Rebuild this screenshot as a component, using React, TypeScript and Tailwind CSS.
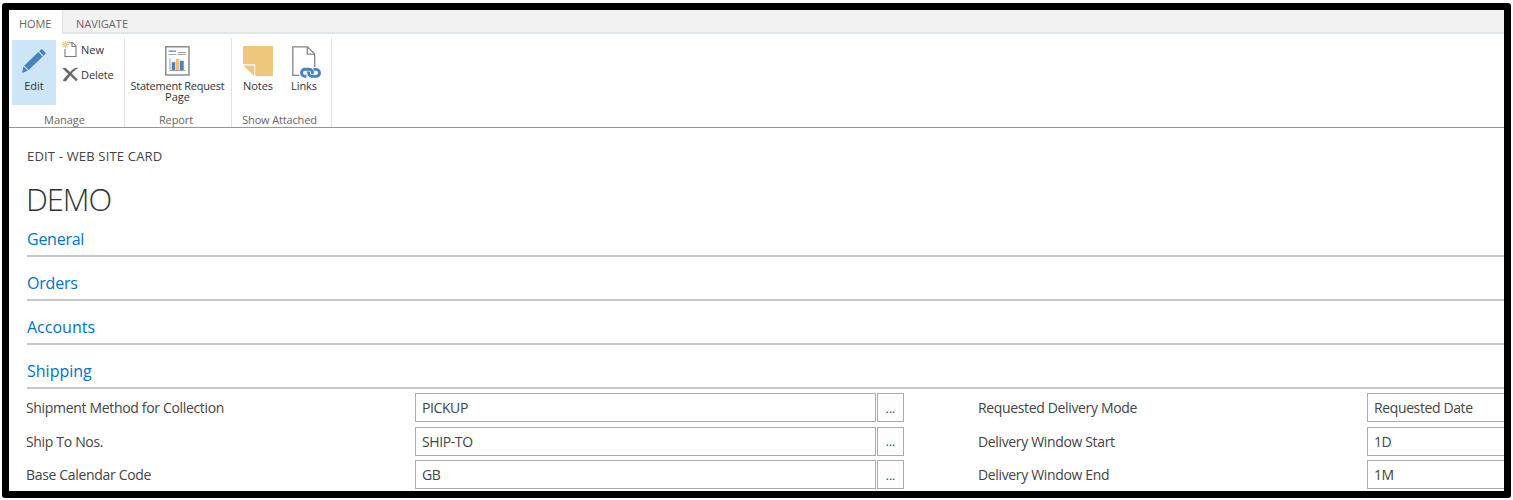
import type { ReactNode } from "react";

function PencilIcon() {
  return (
    <svg width="24" height="24" viewBox="0 0 24 24" fill="#4682be">
      <path d="M2.200 16.700 16.300 3.100l4.400 4.400L6.700 21z" />
      <path d="M17.200 2.300l1.600-1.600c.6-.5 1.300-.5 1.800 0l2.700 2.700c.5.600.5 1.200 0 1.800l-1.700 1.600z" />
      <path d="M1.500 17.600 5.800 21.700 0 23.900z" />
    </svg>
  );
}

function NewIcon() {
  return (
    <svg width="16" height="17" viewBox="0 0 16 17" fill="none">
      <path d="M6.500 1.700h4.300l3.200 3.200v10.600h-11V8" stroke="#7a7a7a" strokeWidth="1.100" />
      <path d="M10 1.700v3.800h4" stroke="#7a7a7a" strokeWidth="1.100" />
      <path d="M3.500 0v7M0 3.500h7M1.100 1.100l4.800 4.800M5.900 1.100 1.100 5.900" stroke="#eebc68" strokeWidth="1.100" />
      <circle cx="3.500" cy="3.500" r="1.100" fill="#fff" />
    </svg>
  );
}

function DeleteIcon() {
  return (
    <svg width="17" height="15" viewBox="0 0 17 15" fill="#686868">
      <path d="M.5 1.600C1.500.6 3 .3 4 1.200L8 5C10 2.800 12.500 1 15.600.5L16 1.200C13.500 2.500 11.300 4.500 9.600 6.600L15.700 12.500 14.200 14.200 8.100 8.500C6.500 10.600 5.300 12.400 4.200 14 3.200 14.700 1.400 14.300.8 13.200 2.500 11 4.400 8.900 6.300 6.900z" />
    </svg>
  );
}

function ReportIcon() {
  return (
    <svg width="25" height="30" viewBox="0 0 25 30" fill="none">
      <rect x=".8" y=".8" width="23.200" height="28.200" stroke="#858585" strokeWidth="1.400" />
      <path d="M3.500 8.500h8M13 6.500h8M13 8.500h8" stroke="#a0a0a0" />
      <path d="M3.500 5.200h7.500" stroke="#4682be" strokeWidth="1.200" />
      <path d="M5 12.500v12h15.500" stroke="#a0a0a0" />
      <path d="M6.700 16.300h3.600V24H6.700zM15 14.800h3.700V24H15z" fill="#4682be" />
      <path d="M11 12.800h3.500V24H11z" fill="#eebf70" />
    </svg>
  );
}

function NotesIcon() {
  return (
    <svg width="30" height="30" viewBox="0 0 30 30" fill="#eec77d">
      <path d="M0 0h30v30H12.200V18.300H0z" />
      <path d="M.3 19.500h10.800v10.400z" />
    </svg>
  );
}

function LinksIcon() {
  return (
    <svg width="30" height="33" viewBox="0 0 30 33" fill="none">
      <path d="M7.500 29.300H.8V.8h14.700l7.200 7.300v13" stroke="#858585" strokeWidth="1.300" />
      <path d="M15.300.8v7.400h7.400" stroke="#858585" strokeWidth="1.300" />
      <g stroke="#4682be" strokeWidth="2.900">
        <path d="M14.500 30.200h-1.500a3.500 3.500 0 0 1 0-7h4a3.500 3.500 0 0 1 3.200 5" />
        <path d="M21.500 23.400h2.500a3.500 3.500 0 0 1 0 7H20a3.500 3.500 0 0 1-3.200-5" />
      </g>
    </svg>
  );
}

function Section({ children }: { children: ReactNode }) {
  return (
    <div className="h-[44px] border-b-2 border-[#c6c6c6] pt-[15px] text-[16px] leading-[22px] text-[#0072c6]">
      {children}
    </div>
  );
}

function LookupField({ label, value }: { label: string; value: string }) {
  return (
    <div className="flex h-[29px] items-center">
      <span className="w-[389px] shrink-0 pt-px tracking-[-0.33px]">{label}</span>
      <div className="mr-px flex h-[29px] w-[461px] items-center border border-[#ababab] pl-[6px] pt-px tracking-[-0.4px]">{value}</div>
      <button className="h-[29px] w-[27px] border border-[#ababab] bg-[#fdfdfd] pt-[2px] text-[12px]">...</button>
    </div>
  );
}

function TextField({ label, value }: { label: string; value: string }) {
  return (
    <div className="flex h-[29px] items-center">
      <span className="w-[389px] shrink-0 pt-px tracking-[-0.35px]">{label}</span>
      <div className="flex h-[29px] flex-1 items-center border border-r-0 border-[#ababab] pl-[6px] pt-px tracking-[-0.38px]">{value}</div>
    </div>
  );
}

export default function App() {
  return (
    <div className="h-[500px] w-[1513px] overflow-hidden bg-white pl-[2px] pt-[3px] font-['Open_Sans','Noto_Sans',sans-serif] text-[#444]">
      <div className="flex h-[495px] w-[1509px] flex-col overflow-hidden rounded-[3px] border-[7px] border-black bg-white">
        <nav className="flex h-[24px] shrink-0 border-b-2 border-[#e0e6ea] bg-[#f2f2f2] text-[11px] leading-[28px] text-[#666]">
          <div className="h-[24px] w-[54px] shrink-0 border-r border-[#dde3e7] bg-white pl-[10px] tracking-[-0.1px]">HOME</div>
          <div className="pl-[13px]">NAVIGATE</div>
        </nav>
        <div className="flex h-[94px] shrink-0 border-b border-[#96969d] pt-[4px] text-[11px] leading-[11px] text-[#333]">
          <div className="flex w-[116px] flex-col border-r border-[#e1e1e1] pl-[3px] pt-[2px]">
            <div className="flex h-[65px]">
              <button className="flex w-[44px] flex-col items-center bg-[#cde6f7] pt-[9px]">
                <PencilIcon />
                <span className="mt-[7px]">Edit</span>
              </button>
              <div className="flex flex-col pl-[6px] pt-px">
                <button className="flex h-[16px] items-center gap-[3px]"><NewIcon /><span>New</span></button>
                <button className="mt-[9px] flex h-[17px] items-center gap-[2px] tracking-[-0.1px]"><DeleteIcon /><span>Delete</span></button>
              </div>
            </div>
            <div className="pr-[7px] pt-[9px] text-center text-[#666]">Manage</div>
          </div>
          <div className="flex w-[107px] flex-col items-center border-r border-[#e1e1e1] pt-[8px]">
            <div className="pr-[2px]"><ReportIcon /></div>
            <div className="mt-[4px] whitespace-nowrap pr-px tracking-[-0.22px]">Statement Request</div>
            <div className="pr-px">Page</div>
            <div className="mt-[12px] pr-[4px] tracking-[-0.1px] text-[#666]">Report</div>
          </div>
          <div className="flex w-[100px] flex-col border-r border-[#e1e1e1] pt-[8px]">
            <div className="flex h-[66px]">
              <div className="flex w-[52px] flex-col items-center"><NotesIcon /><span className="mt-[4px]">Notes</span></div>
              <div className="flex w-[40px] flex-col items-center"><div className="h-[30px] pl-[6px]"><LinksIcon /></div><span className="mt-[4px] tracking-[-0.1px]">Links</span></div>
            </div>
            <div className="mt-[2px] pr-[4px] text-center tracking-[-0.15px] text-[#666]">Show Attached</div>
          </div>
        </div>
        <main className="pl-[18px]">
          <p className="pt-[18px] text-[13px] leading-[20px] tracking-[0.18px]">EDIT - WEB SITE CARD</p>
          <h1 className="-ml-px mt-[14px] h-[33px] text-[31px] font-light leading-[39px] tracking-[-1.1px] text-[#333]">DEMO</h1>
          <div>
            <Section><span className="tracking-[-0.25px]">General</span></Section>
            <Section><span className="tracking-[-0.2px]">Orders</span></Section>
            <Section><span>Accounts</span></Section>
            <Section><span>Shipping</span></Section>
          </div>
          <div className="-ml-px flex gap-[74px] pt-[4px] text-[14px] leading-[20px]">
            <div className="flex w-[878px] shrink-0 flex-col gap-[4.500px]">
              <LookupField label="Shipment Method for Collection" value="PICKUP" />
              <LookupField label="Ship To Nos." value="SHIP-TO" />
              <LookupField label="Base Calendar Code" value="GB" />
            </div>
            <div className="flex flex-1 flex-col gap-[4.500px]">
              <TextField label="Requested Delivery Mode" value="Requested Date" />
              <TextField label="Delivery Window Start" value="1D" />
              <TextField label="Delivery Window End" value="1M" />
            </div>
          </div>
        </main>
      </div>
    </div>
  );
}
